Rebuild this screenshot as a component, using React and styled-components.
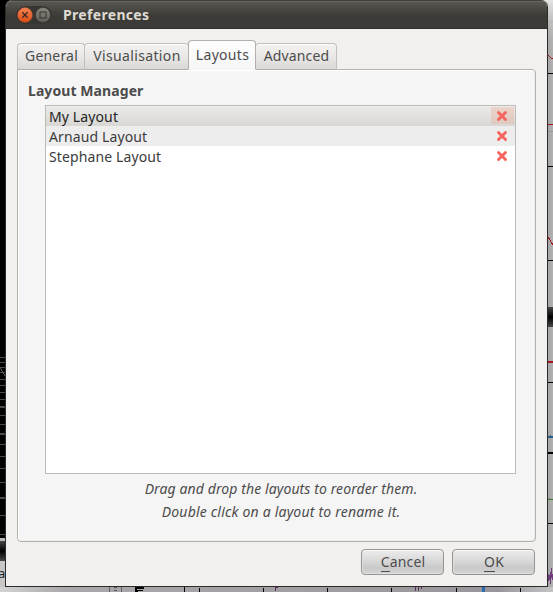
import React from "react";
import styled, { createGlobalStyle } from "styled-components";

const GlobalStyle = createGlobalStyle`
  *, *::before { box-sizing: border-box; }
  body { margin: 0; overflow: hidden; background: #9f9fa0; }
`;

const Desktop = styled.div`
  position: relative;
  width: 553px;
  height: 592px;
  padding-left: 5px;
  overflow: hidden;
  font: 14px/20px "Noto Sans", "Open Sans", sans-serif;
  color: #4c4c4c;
`;

const Backdrop = styled.svg`
  position: absolute;
  inset: 0;
`;

const Window = styled.main`
  position: relative;
  display: flex;
  flex-direction: column;
  width: 543px;
  height: 587px;
  border: solid #2c2b29;
  border-width: 0 1px 1px;
  border-radius: 7px 7px 0 0;
  background: #f1f0ee;
  overflow: hidden;
`;

const TitleBar = styled.header`
  display: flex;
  align-items: center;
  flex: none;
  height: 29px;
  padding: 1px 0 0 9.5px;
  border-top: 1px solid #3f3e3a;
  border-bottom: 1px solid #302f2c;
  background: linear-gradient(#66655e 0 1px, #575650 1px, #3c3b37 55%);
`;

const WindowControls = styled.div`
  display: flex;
  gap: 2px;
  padding: 1px;
  border-radius: 9px;
  background: #373632;
`;

const ControlIcon = styled.svg`
  display: block;
  width: 16px;
  height: 16px;
`;

const WindowTitle = styled.h1`
  margin: 0 0 0 11.5px;
  font-size: 14px;
  line-height: 20px;
  letter-spacing: 0.32px;
  color: #dfdbd2;
`;

const Body = styled.div`
  display: flex;
  flex-direction: column;
  flex: 1;
  padding: 11px 11px 12px;
`;

const TabBar = styled.nav`
  display: flex;
  align-items: flex-end;
  height: 30px;
  margin-bottom: -1px;
  position: relative;
`;

const Tab = styled.button`
  width: ${(p) => p.$width}px;
  height: ${(p) => (p.$active ? 30 : 27)}px;
  margin: 0 -1px 0 0;
  padding: ${(p) => (p.$active ? "0 0 1px 1px" : "0 0 2px 1px")};
  border: 1px solid ${(p) => (p.$active ? "#b3b0ab" : "#c3c0bb")};
  border-bottom-color: ${(p) => (p.$active ? "#f6f6f6" : "#b3b0ab")};
  border-radius: 4px 4px 0 0;
  background: ${(p) =>
    p.$active
      ? "linear-gradient(#fefefe, #f6f6f6)"
      : "linear-gradient(#f3f2f0, #e9e8e6 50%, #dad8d5)"};
  box-shadow: inset 0 1px #fcfcfb;
  color: #4c4c4c;
  font: inherit;
  letter-spacing: ${(p) => p.$spacing}px;
  position: relative;
  z-index: ${(p) => (p.$active ? 1 : 0)};
`;

const TabPanel = styled.section`
  display: flex;
  flex-direction: column;
  height: 473px;
  padding: 11px 19px 0 27px;
  border: 1px solid #b5b2ac;
  border-radius: 0 4px 4px 4px;
  background: #f5f5f5;
  box-shadow: inset 1px 1px #fff, inset -1px -1px #ebebeb;
`;

const SectionTitle = styled.h2`
  margin: 0 0 4px -17px;
  font-size: 14px;
  line-height: 20px;
  letter-spacing: 0.08px;
`;

const LayoutList = styled.ul`
  flex: none;
  height: 369px;
  margin: 0;
  padding: 0;
  list-style: none;
  border: 1px solid #bcbbb5;
  background: #fff;
`;

const LayoutRow = styled.li`
  display: flex;
  align-items: flex-start;
  justify-content: space-between;
  height: 20px;
  padding: 1px 1px 0 3px;
  background: ${(p) => p.$background};
  color: ${(p) => (p.$selected ? "#242424" : "#3c3c3c")};
  letter-spacing: 0.12px;
`;

const RemoveButton = styled.button`
  display: grid;
  place-items: center;
  width: 23px;
  height: 17px;
  margin: 0;
  padding: 1px 1px 0 0;
  border: 0;
  background: ${(p) =>
    p.$hot ? "linear-gradient(#ebd3c9, #dfc8bf)" : "transparent"};
`;

const Hint = styled.p`
  margin: ${(p) => p.$top}px 0 0;
  padding-left: 1px;
  font-style: italic;
  text-align: center;
  letter-spacing: ${(p) => p.$spacing}px;
`;

const Actions = styled.footer`
  display: flex;
  justify-content: flex-end;
  gap: 8px;
  margin: 7px 1px 0 0;
`;

const ActionButton = styled.button`
  width: 83px;
  height: 26px;
  padding: 0 0 1px 1px;
  border: 1px solid #989590;
  border-radius: 4px;
  background: linear-gradient(#ededed, #d8d8d8 45%, #c9c9c9 75%, #d5d5d5);
  box-shadow: inset 0 1px #f8f8f8, inset 1px -1px #dedede;
  color: #4c4c4c;
  font: inherit;
  letter-spacing: 0.15px;
`;

const Mnemonic = styled.span`
  box-shadow: 0 1px #4c4c4c;
`;

const tabs = [
  { name: "General", width: 68, spacing: 0.2 },
  { name: "Visualisation", width: 105, spacing: 0.35 },
  { name: "Layouts", width: 68, spacing: 0.3, active: true },
  { name: "Advanced", width: 82, spacing: 0.15 },
];

const layouts = [
  { name: "My Layout", background: "linear-gradient(#efeeed 0 1px, #e9e9e7 1px, #d9d7d4)", selected: true },
  { name: "Arnaud Layout", background: "#ededed" },
  { name: "Stephane Layout", background: "#fff" },
];

const faderLines = [357, 362, 367, 372, 379, 385, 392, 399, 415, 424, 444, 456, 468, 482, 515, 534];
const rightTicks = [73, 166, 260, 382, 523];
const bottomTicks = [184, 199, 263, 327, 391, 456, 520];

function SignalBackdrop() {
  return (
    <Backdrop width="553" height="592" shapeRendering="crispEdges">
      <defs>
        <linearGradient id="edge">
          <stop stopColor="#929292" />
          <stop offset="1" stopColor="#b1b1b1" />
        </linearGradient>
        <linearGradient id="glow" x2="0" y2="1">
          <stop stopColor="#e4e4e4" />
          <stop offset="1" stopColor="#b0b0b0" stopOpacity="0" />
        </linearGradient>
        <linearGradient id="band" x2="0" y2="1">
          <stop stopColor="#484848" />
          <stop offset=".5" stopColor="#000" />
          <stop offset="1" stopColor="#484848" />
        </linearGradient>
        <linearGradient id="floor">
          <stop stopColor="#d3d3d3" />
          <stop offset=".12" stopColor="#aaa8aa" />
          <stop offset=".9" stopColor="#98969a" />
          <stop offset="1" stopColor="#c4c3c5" />
        </linearGradient>
      </defs>
      <rect width="20" height="538" />
      {faderLines.map((y) => (
        <rect key={y} y={y} width="5" height="1" fill="#4b4b4b" />
      ))}
      {[406, 433, 497].map((y) => (
        <rect key={y} y={y} width="5" height="2" fill="#4b4b4b" />
      ))}
      <path d="M0 367l2 4 3 5" stroke="#555" fill="none" />
      <rect y="538" width="5" height="3" fill="#bbb" />
      <rect y="541" width="5" height="20" fill="url(#band)" />
      <rect y="561" width="5" height="31" fill="#c7c7c7" />
      <rect x="538" width="15" height="592" fill="url(#edge)" />
      <rect x="538" width="15" height="50" fill="url(#glow)" />
      <rect x="548" y="21" width="5" height="1" fill="#b5b5b5" />
      <rect x="548" y="131" width="5" height="1" fill="#9a9a9a" />
      {rightTicks.map((y) => (
        <rect key={y} x="548" y={y} width="5" height="1" />
      ))}
      <rect x="548" y="124" width="5" height="1" fill="#a31720" />
      <path d="M548 55l3 3h2M548 237l5 8" stroke="#a31720" fill="none" />
      <rect x="548" y="307" width="5" height="20" fill="url(#band)" />
      <rect x="548" y="361" width="5" height="2" fill="#a31720" />
      <rect x="548" y="436" width="5" height="2" fill="#285f91" />
      <rect x="550" y="435" width="1" height="3" fill="#285f91" />
      <rect x="548" y="452" width="5" height="2" />
      <path d="M548 499.500h5M549.500 498v1" stroke="#3f773c" />
      <rect y="587" width="553" height="5" fill="url(#floor)" />
      <path d="M109.500 587v5M121.500 587v5" stroke="#666" />
      <path d="M114 587.500h3M114 590.500h3" stroke="#555" />
      <path d="M135 587h9v2h-7v1h6v1h-5v1h-3z" />
      {bottomTicks.map((x) => (
        <rect key={x} x={x} y={x === 184 ? 587 : 588} width="1" height="5" />
      ))}
      <path d="M275.500 591v-4h2M415.500 587v4M418.500 591v-4M421.500 587v2" stroke="#55325d" fill="none" />
      <rect x="482" y="587" width="3" height="5" fill="#2d6cae" />
      <path d="M548.500 574v7M549.500 575v5M550.500 572v12M551.500 568v10M552.500 574v6" stroke="#713c7b" />
    </Backdrop>
  );
}

const TrackLabel = styled.span`
  position: absolute;
  left: -2px;
  top: 563px;
  font-size: 13px;
  color: #222;
`;

function CloseIcon() {
  return (
    <ControlIcon viewBox="0 0 16 16">
      <defs>
        <linearGradient id="orange" x2="0" y2="1">
          <stop stopColor="#f88458" />
          <stop offset="1" stopColor="#dc4c13" />
        </linearGradient>
      </defs>
      <circle cx="8" cy="8" r="7.500" fill="url(#orange)" stroke="#8e4429" strokeWidth=".5" />
      <path d="M5.300 5.300l5.400 5.400M10.700 5.300l-5.400 5.400" stroke="#3c2a20" strokeWidth="1.300" />
    </ControlIcon>
  );
}

function MaximizeIcon() {
  return (
    <ControlIcon viewBox="0 0 16 16">
      <defs>
        <linearGradient id="gray" x2="0" y2="1">
          <stop stopColor="#8a8980" />
          <stop offset="1" stopColor="#605f58" />
        </linearGradient>
      </defs>
      <circle cx="8" cy="8" r="7.500" fill="url(#gray)" stroke="#32312d" strokeWidth=".5" />
      <rect x="5" y="5" width="6" height="6" fill="none" stroke="#34332f" />
    </ControlIcon>
  );
}

function RemoveIcon() {
  return (
    <svg width="12" height="12" viewBox="0 0 12 12">
      <path d="M2.500 2.500l7 7M9.500 2.500l-7 7" stroke="#f5645f" strokeWidth="2.900" strokeLinecap="round" />
    </svg>
  );
}

export default function App() {
  return (
    <Desktop>
      <GlobalStyle />
      <SignalBackdrop />
      <TrackLabel>a</TrackLabel>
      <Window>
        <TitleBar>
          <WindowControls>
            <CloseIcon />
            <MaximizeIcon />
          </WindowControls>
          <WindowTitle>Preferences</WindowTitle>
        </TitleBar>
        <Body>
          <TabBar>
            {tabs.map((t) => (
              <Tab key={t.name} $width={t.width} $spacing={t.spacing} $active={t.active}>
                {t.name}
              </Tab>
            ))}
          </TabBar>
          <TabPanel>
            <SectionTitle>Layout Manager</SectionTitle>
            <LayoutList>
              {layouts.map((l) => (
                <LayoutRow key={l.name} $background={l.background} $selected={l.selected}>
                  {l.name}
                  <RemoveButton $hot={l.selected} aria-label={`Remove ${l.name}`}>
                    <RemoveIcon />
                  </RemoveButton>
                </LayoutRow>
              ))}
            </LayoutList>
            <Hint $top={5} $spacing={0.1}>Drag and drop the layouts to reorder them.</Hint>
            <Hint $top={3} $spacing={0.2}>Double click on a layout to rename it.</Hint>
          </TabPanel>
          <Actions>
            <ActionButton><Mnemonic>C</Mnemonic>ancel</ActionButton>
            <ActionButton><Mnemonic>O</Mnemonic>K</ActionButton>
          </Actions>
        </Body>
      </Window>
    </Desktop>
  );
}
